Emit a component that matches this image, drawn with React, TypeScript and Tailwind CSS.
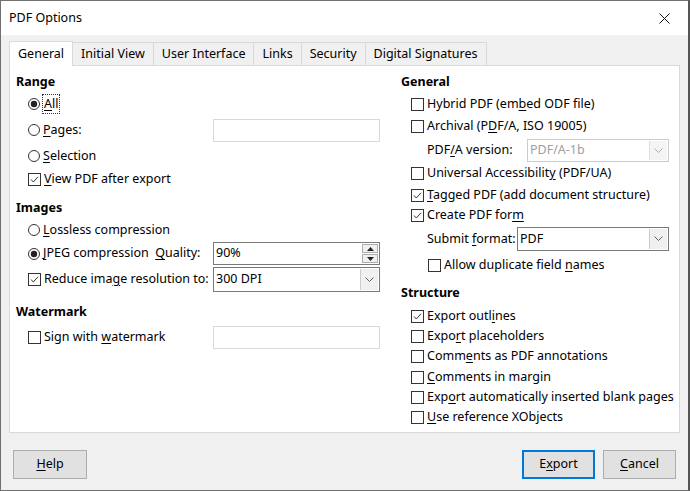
import React from 'react';

const font = "font-['Segoe_UI','Noto_Sans',sans-serif]";

function U({ children }: { children: React.ReactNode }) {
  return <span className="underline underline-offset-[2px] decoration-1">{children}</span>;
}

function Radio({ checked }: { checked?: boolean }) {
  return (
    <svg width="12" height="12" viewBox="0 0 12 12" className="shrink-0">
      <circle cx="6" cy="6" r="5.5" fill="#fff" stroke="#333" />
      {checked && <circle cx="6" cy="6" r="3.2" fill="#222" />}
    </svg>
  );
}

function Check({ checked }: { checked?: boolean }) {
  return (
    <svg width="13" height="13" viewBox="0 0 13 13" className="shrink-0">
      <rect x="0.5" y="0.5" width="12" height="12" fill="#fff" stroke="#333" />
      {checked && <polyline points="3,6.5 5.3,9 10,3.8" fill="none" stroke="#333" strokeWidth="1" />}
    </svg>
  );
}

function Chevron({ color = '#606060' }: { color?: string }) {
  return (
    <svg width="9" height="6" viewBox="0 0 9 6">
      <polyline points="0.5,0.5 4.5,4.5 8.5,0.5" fill="none" stroke={color} strokeWidth="1" />
    </svg>
  );
}

function Combo({ value, disabled, className }: { value: string; disabled?: boolean; className: string }) {
  return (
    <div className={`flex shrink-0 bg-white border ${disabled ? 'border-[#cccccc] text-[#a0a0a0]' : 'border-[#7a7a7a] text-black'} ${className}`}>
      <div className="flex-1 flex items-center pl-[2px]">{value}</div>
      <div className={`w-[18px] flex items-center justify-center border-l ${disabled ? 'border-[#e0e0e0] bg-[#f4f4f4]' : 'border-[#cccccc] bg-[#f0f0f0]'} m-[1px]`}>
        <Chevron color={disabled ? '#b0b0b0' : '#606060'} />
      </div>
    </div>
  );
}

function Row({ children, className = '' }: { children: React.ReactNode; className?: string }) {
  return <div className={`flex items-center gap-[3px] ${className}`}>{children}</div>;
}

export default function App() {
  const tabs = ['Initial View', 'User Interface', 'Links', 'Security', 'Digital Signatures'];
  return (
    <div className={`w-[690px] h-[491px] bg-[#f0f0f0] border border-[#707070] border-r-2 border-r-[#555] text-[12.5px] text-black ${font} flex flex-col overflow-hidden`}>
      {/* title bar */}
      <div className="h-[34px] bg-white flex items-center justify-between pl-[8px] pr-[18px] shrink-0">
        <span>PDF Options</span>
        <svg width="11" height="11" viewBox="0 0 11 11">
          <path d="M0.5 0.5 L10.5 10.5 M10.5 0.5 L0.5 10.5" stroke="#111" strokeWidth="1" />
        </svg>
      </div>

      {/* tabs */}
      <div className="flex items-end pl-[8px] mt-[6px] h-[24px] shrink-0">
        <div className="h-[25px] -mb-[1px] relative z-10 bg-white border border-[#d9d9d9] border-b-0 px-[8px] flex items-center">General</div>
        {tabs.map((t) => (
          <div key={t} className="h-[23px] bg-[#f0f0f0] border border-[#d9d9d9] border-l-0 border-b-0 px-[8px] flex items-center">
            {t}
          </div>
        ))}
      </div>

      {/* panel */}
      <div className="mx-[8px] h-[368px] bg-white border border-[#d9d9d9] flex shrink-0">
        {/* left column */}
        <div className="w-[384px] pl-[6px] pt-[6px] flex flex-col">
          <div className="h-[20px] flex items-center font-bold">Range</div>
          <Row className="h-[22px] pl-[12px] mt-[1px]">
            <Radio checked />
            <span className="outline-1 outline-dotted outline-[#333] px-[1px]"><U>A</U>ll</span>
          </Row>
          <div className="h-[22px] mt-[4px] flex items-center">
            <Row className="pl-[12px] w-[197px] shrink-0">
              <Radio />
              <span><U>P</U>ages:</span>
            </Row>
            <div className="w-[167px] h-[23px] border border-[#d9d9d9] bg-white" />
          </div>
          <Row className="h-[22px] pl-[12px] mt-[4px]">
            <Radio />
            <span><U>S</U>election</span>
          </Row>
          <Row className="h-[22px] pl-[12px] mt-[1px]">
            <Check checked />
            <span><U>V</U>iew PDF after export</span>
          </Row>
          <div className="h-[20px] mt-[8px] flex items-center font-bold">Images</div>
          <Row className="h-[22px] pl-[12px] mt-[1px]">
            <Radio />
            <span><U>L</U>ossless compression</span>
          </Row>
          <div className="h-[23px] mt-[1px] flex items-center">
            <Row className="pl-[12px] w-[197px] shrink-0">
              <Radio checked />
              <span><U>J</U>PEG compression&nbsp; <U>Q</U>uality:</span>
            </Row>
            <div className="w-[167px] h-[23px] border border-[#7a7a7a] bg-white flex">
              <div className="flex-1 flex items-center pl-[2px]">90%</div>
              <div className="w-[16px] flex flex-col m-[1px] gap-[1px]">
                <div className="flex-1 bg-[#f0f0f0] border border-[#adadad] flex items-center justify-center">
                  <svg width="7" height="4" viewBox="0 0 7 4"><polygon points="0,4 3.5,0 7,4" fill="#222" /></svg>
                </div>
                <div className="flex-1 bg-[#f0f0f0] border border-[#adadad] flex items-center justify-center">
                  <svg width="7" height="4" viewBox="0 0 7 4"><polygon points="0,0 3.5,4 7,0" fill="#222" /></svg>
                </div>
              </div>
            </div>
          </div>
          <div className="h-[25px] mt-[2px] flex items-center">
            <Row className="pl-[12px] w-[197px] shrink-0">
              <Check checked />
              <span>Reduce ima<U>g</U>e resolution to:</span>
            </Row>
            <Combo value="300 DPI" className="w-[167px] h-[25px]" />
          </div>
          <div className="h-[20px] mt-[10px] flex items-center font-bold">Watermark</div>
          <div className="h-[23px] mt-[4px] flex items-center">
            <Row className="pl-[12px] w-[197px] shrink-0">
              <Check />
              <span>Sign with <U>w</U>atermark</span>
            </Row>
            <div className="w-[167px] h-[23px] border border-[#d9d9d9] bg-white" />
          </div>
        </div>

        {/* right column */}
        <div className="flex-1 pl-[7px] pt-[6px] flex flex-col">
          <div className="h-[20px] flex items-center font-bold">General</div>
          <Row className="h-[20px] pl-[10px] mt-[2px]">
            <Check />
            <span>Hybrid PDF (em<U>b</U>ed ODF file)</span>
          </Row>
          <Row className="h-[20px] pl-[10px] mt-[2px]">
            <Check />
            <span>Archival (P<U>D</U>F/A, ISO 19005)</span>
          </Row>
          <div className="h-[23px] mt-[3px] flex items-center pl-[26px]">
            <span className="w-[100px] shrink-0">PDF<U>/</U>A version:</span>
            <Combo value="PDF/A-1b" disabled className="w-[142px] h-[23px]" />
          </div>
          <Row className="h-[20px] pl-[10px] mt-[1px]">
            <Check />
            <span>Universal Accessibilit<U>y</U> (PDF/UA)</span>
          </Row>
          <Row className="h-[20px] pl-[10px] mt-[2px]">
            <Check checked />
            <span><U>T</U>agged PDF (add document structure)</span>
          </Row>
          <Row className="h-[20px] pl-[10px]">
            <Check checked />
            <span>Create PDF for<U>m</U></span>
          </Row>
          <div className="h-[24px] mt-[2px] flex items-center pl-[26px]">
            <span className="w-[90px] shrink-0">Submit <U>f</U>ormat:</span>
            <Combo value="PDF" className="w-[152px] h-[24px]" />
          </div>
          <Row className="h-[20px] pl-[27px] mt-[4px]">
            <Check />
            <span>Allow duplicate field <U>n</U>ames</span>
          </Row>
          <div className="h-[20px] mt-[8px] flex items-center font-bold">Structure</div>
          <Row className="h-[20px] pl-[10px] mt-[3px]">
            <Check checked />
            <span>Export outl<U>i</U>nes</span>
          </Row>
          <Row className="h-[20px] pl-[10px]">
            <Check />
            <span>Expo<U>r</U>t placeholders</span>
          </Row>
          <Row className="h-[20px] pl-[10px]">
            <Check />
            <span>Comm<U>e</U>nts as PDF annotations</span>
          </Row>
          <Row className="h-[20px] pl-[10px] mt-[1px]">
            <Check />
            <span><U>C</U>omments in margin</span>
          </Row>
          <Row className="h-[20px] pl-[10px]">
            <Check />
            <span>Exp<U>o</U>rt automatically inserted blank pages</span>
          </Row>
          <Row className="h-[20px] pl-[10px]">
            <Check />
            <span><U>U</U>se reference XObjects</span>
          </Row>
        </div>
      </div>

      {/* buttons */}
      <div className="flex items-center mt-[17px] px-[12px]">
        <button className="w-[74px] h-[29px] bg-[#e1e1e1] border border-[#adadad]"><U>H</U>elp</button>
        <div className="flex-1" />
        <button className="w-[73px] h-[29px] bg-[#e1e1e1] border-2 border-[#0078d7]">E<U>x</U>port</button>
        <button className="w-[73px] h-[29px] ml-[8px] bg-[#e1e1e1] border border-[#adadad]"><U>C</U>ancel</button>
      </div>
    </div>
  );
}
